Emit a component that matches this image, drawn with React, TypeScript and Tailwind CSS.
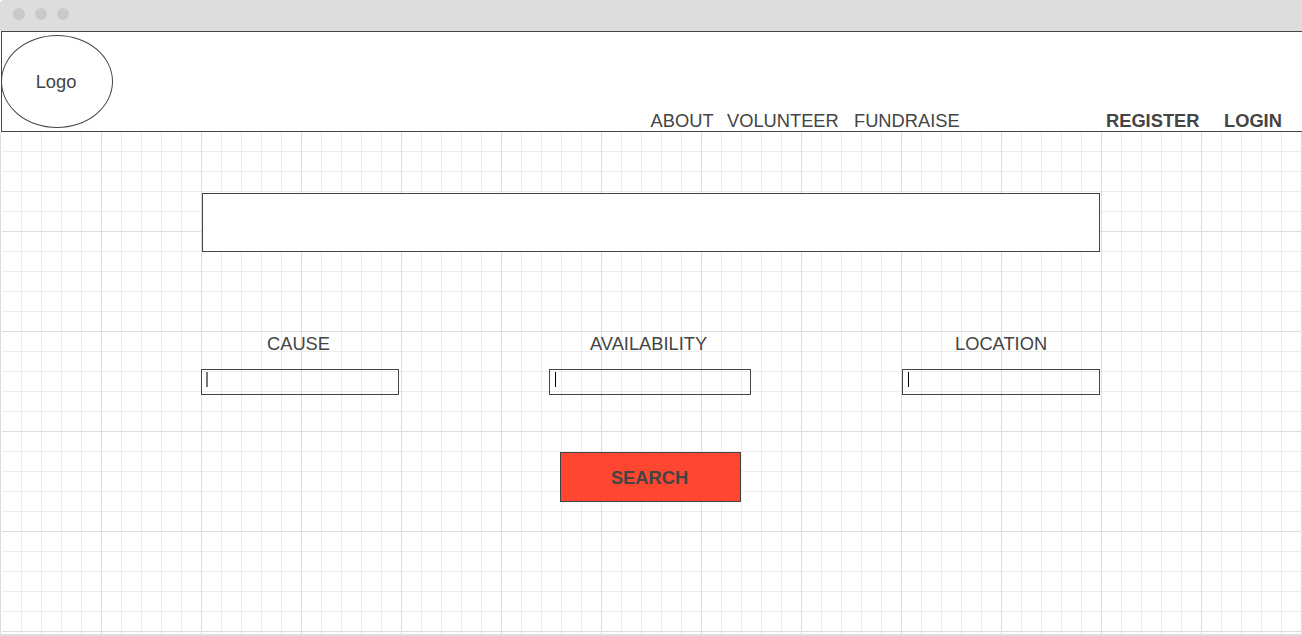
const searchFields = [
  { label: "CAUSE", column: "w-[198px]", labelClass: "pl-[66px]", inputClass: "pl-[4px]", caret: "w-[2px] bg-[#777777]" },
  { label: "AVAILABILITY", column: "ml-[150px] w-[202px]", labelClass: "pl-[41px]", inputClass: "pl-[5px]", caret: "w-px bg-black" },
  { label: "LOCATION", column: "ml-[151px] w-[198px]", labelClass: "pl-[53px]", inputClass: "pl-[5px]", caret: "w-px bg-black" },
];

function TitleBar() {
  return (
    <div className="flex h-[31px] items-start gap-2.5 rounded-tl-[4px] bg-[#dddddd] pl-[13px] pt-2">
      <span className="size-3 rounded-full bg-[#c9c9c9]" />
      <span className="size-3 rounded-full bg-[#c9c9c9]" />
      <span className="size-3 rounded-full bg-[#c9c9c9]" />
    </div>
  );
}

function Header() {
  return (
    <header className="ml-px flex h-[101px] justify-between border-y border-l border-[#444444] bg-white">
      <div className="-ml-px mt-[3px] flex h-[93px] w-[112px] items-center justify-center rounded-[50%] border border-[#444444] pr-[2px]">
        Logo
      </div>
      <nav className="flex items-end pr-5 leading-[21px]">
        <a className="w-[76.4px]">ABOUT</a>
        <a className="w-[127px]">VOLUNTEER</a>
        <a className="w-[252px]">FUNDRAISE</a>
        <a className="w-[118px] font-bold">REGISTER</a>
        <a className="w-[58px] font-bold">LOGIN</a>
      </nav>
    </header>
  );
}

export default function App() {
  return (
    <div className="flex h-[636px] w-[1302px] flex-col overflow-hidden bg-white font-['Liberation_Sans',Arial,sans-serif] text-[18.3px] text-[#444444]">
      <TitleBar />
      <Header />
      <main className="flex min-h-0 flex-1 border-b-2 border-l border-[#dddddd] pl-px">
        <div className="flex-1 bg-[linear-gradient(to_right,transparent_99px,#dddddd_99px),linear-gradient(to_bottom,transparent_99px,#dddddd_99px),linear-gradient(to_right,transparent_19px,#ececec_19px),linear-gradient(to_bottom,transparent_19px,#ececec_19px)] bg-[size:100px_100px,100px_100px,20px_20px,20px_20px] pl-[199px] pt-[61px]">
          <div className="ml-px h-[59px] w-[898px] border border-[#444444] bg-white" />
          <div className="mt-[81px] flex">
            {searchFields.map((field) => (
              <div key={field.label} className={field.column}>
                <div className={`h-9 whitespace-nowrap leading-[21px] ${field.labelClass}`}>{field.label}</div>
                <div className={`flex h-[26px] border border-[#444444] pt-[2px] ${field.inputClass}`}>
                  <span className={`h-[15px] ${field.caret}`} />
                </div>
              </div>
            ))}
          </div>
          <button className="ml-[359px] mt-[57px] flex h-[50px] w-[181px] items-center justify-center border border-[#444444] bg-[#ff4630] pr-[2px] pt-[2px] font-bold">
            SEARCH
          </button>
        </div>
      </main>
    </div>
  );
}
